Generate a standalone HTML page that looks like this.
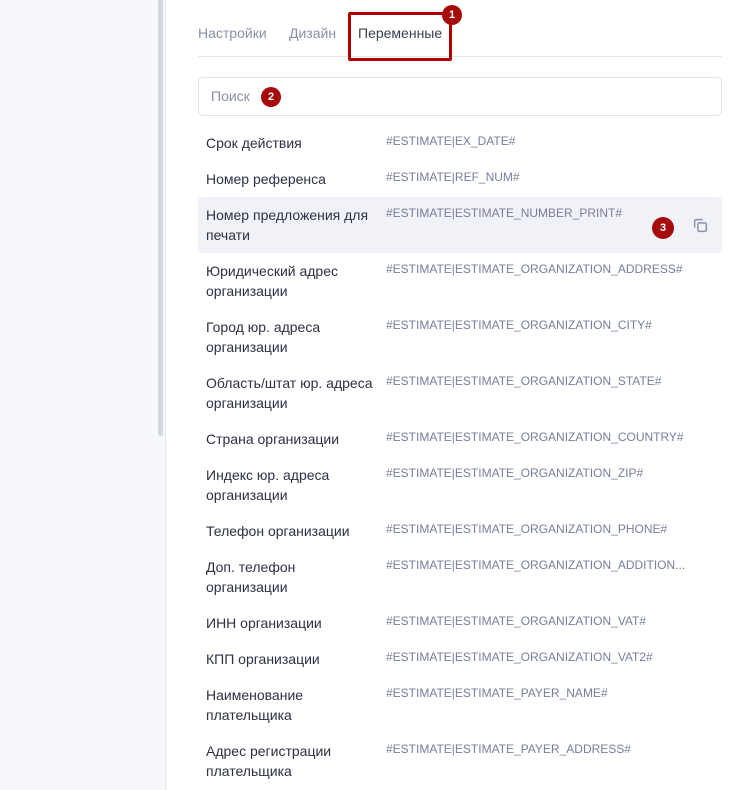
<!DOCTYPE html>
<html><head><meta charset="utf-8"><style>
body{margin:0;width:732px;height:790px;overflow:hidden;background:#fff;font-family:"Liberation Sans",sans-serif;position:relative}
.left{position:absolute;left:0;top:0;width:165px;height:790px;background:#f7f8fc;border-right:1px solid #e6e8ef}
.sb{position:absolute;left:158px;top:0;width:5px;height:436px;background:#d3d7e0;border-radius:0 0 3px 3px}
.tabs{position:absolute;left:198px;top:0;width:524px;height:56px;border-bottom:1px solid #e4e6ee}
.tab{position:absolute;top:25px;font-size:14px;color:#8a90a6}
.hl{position:absolute;left:348px;top:12px;width:98px;height:43px;border:3px solid #b00000;border-radius:2px}
.badge{position:absolute;width:20px;height:20px;border-radius:50%;background:#a50b0b;color:#fff;font-size:11px;font-weight:bold;text-align:center;line-height:20px}
.search{position:absolute;left:198px;top:77px;width:522px;height:37px;border:1px solid #e1e4ec;border-radius:5px}
.search span{position:absolute;left:12px;top:10px;font-size:14px;color:#8a90a6}
.row{position:absolute;left:198px;width:524px}
.row .l{position:absolute;left:8px;top:8px;width:176px;font-size:14px;line-height:20px;color:#2d3142}
.row .c{position:absolute;left:188px;top:9px;font-size:12px;color:#767e9e;white-space:nowrap}
.hov{background:#f1f2f7;border-radius:4px}
</style></head><body>
<div class="left"></div><div class="sb"></div>
<div class="tabs">
<div class="tab" style="left:0">Настройки</div>
<div class="tab" style="left:91px">Дизайн</div>
<div class="tab" style="left:160px;color:#3a3f52">Переменные</div>
</div>
<div class="hl"></div>
<div class="badge" style="left:442px;top:5px">1</div>
<div class="search"><span>Поиск</span></div>
<div class="badge" style="left:261px;top:87px">2</div>

<div class="row" style="top:125px;height:36px"><div class="l">Срок действия</div><div class="c">#ESTIMATE|EX_DATE#</div></div>
<div class="row" style="top:161px;height:36px"><div class="l">Номер референса</div><div class="c">#ESTIMATE|REF_NUM#</div></div>
<div class="row hov" style="top:197px;height:56px"><div class="l">Номер предложения для печати</div><div class="c">#ESTIMATE|ESTIMATE_NUMBER_PRINT#</div>
<div class="badge" style="left:454px;top:20px;width:22px;height:22px;line-height:22px">3</div>
<svg style="position:absolute;left:494px;top:20px" width="17" height="17" viewBox="0 0 16 16" fill="none" stroke="#8a90a8" stroke-width="1.4"><rect x="5.5" y="5.5" width="8" height="8" rx="1.5"/><path d="M2.5 10V4a1.5 1.5 0 0 1 1.5-1.5H10"/></svg></div>
<div class="row" style="top:253px;height:56px"><div class="l">Юридический адрес организации</div><div class="c">#ESTIMATE|ESTIMATE_ORGANIZATION_ADDRESS#</div></div>
<div class="row" style="top:309px;height:56px"><div class="l">Город юр. адреса организации</div><div class="c">#ESTIMATE|ESTIMATE_ORGANIZATION_CITY#</div></div>
<div class="row" style="top:365px;height:56px"><div class="l">Область/штат юр. адреса организации</div><div class="c">#ESTIMATE|ESTIMATE_ORGANIZATION_STATE#</div></div>
<div class="row" style="top:421px;height:36px"><div class="l">Страна организации</div><div class="c">#ESTIMATE|ESTIMATE_ORGANIZATION_COUNTRY#</div></div>
<div class="row" style="top:457px;height:56px"><div class="l">Индекс юр. адреса организации</div><div class="c">#ESTIMATE|ESTIMATE_ORGANIZATION_ZIP#</div></div>
<div class="row" style="top:513px;height:36px"><div class="l">Телефон организации</div><div class="c">#ESTIMATE|ESTIMATE_ORGANIZATION_PHONE#</div></div>
<div class="row" style="top:549px;height:56px"><div class="l">Доп. телефон<br>организации</div><div class="c">#ESTIMATE|ESTIMATE_ORGANIZATION_ADDITION...</div></div>
<div class="row" style="top:605px;height:36px"><div class="l">ИНН организации</div><div class="c">#ESTIMATE|ESTIMATE_ORGANIZATION_VAT#</div></div>
<div class="row" style="top:641px;height:36px"><div class="l">КПП организации</div><div class="c">#ESTIMATE|ESTIMATE_ORGANIZATION_VAT2#</div></div>
<div class="row" style="top:677px;height:56px"><div class="l">Наименование плательщика</div><div class="c">#ESTIMATE|ESTIMATE_PAYER_NAME#</div></div>
<div class="row" style="top:733px;height:56px"><div class="l">Адрес регистрации плательщика</div><div class="c">#ESTIMATE|ESTIMATE_PAYER_ADDRESS#</div></div>
</body></html>
